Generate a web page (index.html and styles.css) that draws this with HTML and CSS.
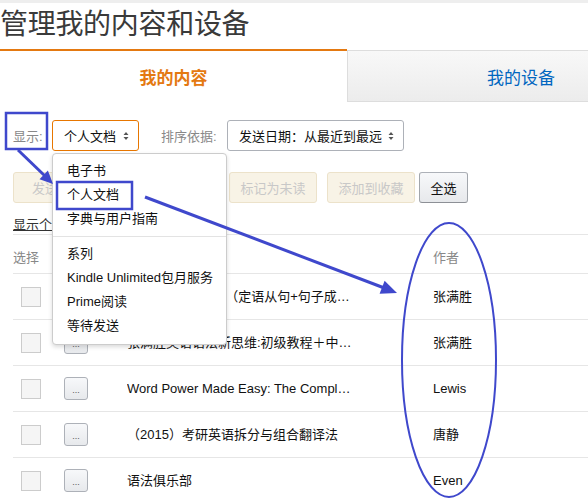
FILE: index.html
```html
<!DOCTYPE html>
<html lang="zh-CN">
<head>
<meta charset="utf-8">
<title>管理我的内容和设备</title>
<link rel="stylesheet" href="styles.css">
</head>
<body>
<div class="topbar"></div>
<h1 class="title">管理我的内容和设备</h1>
<div class="tabs">
  <div class="tab tab-active">我的内容</div>
  <div class="tab tab-inactive">我的设备</div>
</div>
<div class="controls">
  <div class="filter-row">
    <span class="label label-show">显示:</span>
    <div class="select select-type">
      <span>个人文档</span>
      <svg class="updown" width="6" height="10" viewBox="0 0 6 10"><path d="M3 1 L5.5 4 L0.5 4 Z M3 9 L5.5 6 L0.5 6 Z" fill="#555"/></svg>
      <div class="menu">
        <div class="menu-item">电子书</div>
        <div class="menu-item">个人文档</div>
        <div class="menu-item">字典与用户指南</div>
        <div class="menu-divider"></div>
        <div class="menu-item">系列</div>
        <div class="menu-item">Kindle Unlimited包月服务</div>
        <div class="menu-item">Prime阅读</div>
        <div class="menu-item">等待发送</div>
      </div>
    </div>
    <span class="label label-sort">排序依据:</span>
    <div class="select select-sort">
      <span>发送日期：从最近到最远</span>
      <svg class="updown" width="6" height="10" viewBox="0 0 6 10"><path d="M3 1 L5.5 4 L0.5 4 Z M3 9 L5.5 6 L0.5 6 Z" fill="#555"/></svg>
    </div>
  </div>
  <div class="btn-row">
    <button class="btn btn-disabled btn-send">发送到设备</button>
    <button class="btn btn-disabled btn-delete">从库中删除</button>
    <button class="btn btn-disabled btn-mark">标记为未读</button>
    <button class="btn btn-disabled btn-fav">添加到收藏</button>
    <button class="btn btn-normal btn-all">全选</button>
  </div>
  <div class="summary"><span class="summary-link">显示个人文档 (5)</span></div>
  <div class="thead">
    <span>选择</span><span></span><span></span><span>作者</span>
  </div>
  <div class="row">
    <span class="cb"></span><span class="more">...</span>
    <span class="name">英语长难句精讲&nbsp;&nbsp;（定语从句+句子成…</span><span class="author">张满胜</span>
  </div>
  <div class="row">
    <span class="cb"></span><span class="more">...</span>
    <span class="name">张满胜英语语法新思维:初级教程＋中…</span><span class="author">张满胜</span>
  </div>
  <div class="row">
    <span class="cb"></span><span class="more">...</span>
    <span class="name">Word Power Made Easy: The Compl…</span><span class="author">Lewis</span>
  </div>
  <div class="row">
    <span class="cb"></span><span class="more">...</span>
    <span class="name">（2015）考研英语拆分与组合翻译法</span><span class="author">唐静</span>
  </div>
  <div class="row">
    <span class="cb"></span><span class="more">...</span>
    <span class="name">语法俱乐部</span><span class="author">Even</span>
  </div>
</div>
<svg class="annot" width="588" height="498" viewBox="0 0 588 498">
  <g stroke="#3f48cc" fill="none">
    <rect x="6" y="113" width="41" height="36" stroke-width="2.5"/>
    <rect x="57" y="182" width="75" height="27" stroke-width="2.5"/>
    <line x1="18" y1="150" x2="45" y2="176" stroke-width="3"/>
    <line x1="145" y1="197" x2="383" y2="287.5" stroke-width="3"/>
    <ellipse cx="449" cy="360" rx="47" ry="137" stroke-width="2"/>
  </g>
  <g fill="#3f48cc">
    <polygon points="53,184 39.5,179.2 47.9,170.6"/>
    <polygon points="397,293 379.6,293.8 384.6,280.8"/>
  </g>
</svg>
</body>
</html>
```
FILE: styles.css
```css
html, body {
  margin: 0;
  padding: 0;
}
body {
  position: relative;
  width: 588px;
  height: 498px;
  overflow: hidden;
  background: #fff;
  font-family: "Liberation Sans", "Noto Sans CJK SC", sans-serif;
  font-size: 13px;
  color: #111;
}
.topbar {
  height: 3px;
  background: #eee;
}
.title {
  margin: -1px 0 0 0;
  height: 47px;
  font-family: "Noto Sans CJK SC", sans-serif;
  font-weight: normal;
  font-size: 28px;
  line-height: 40px;
  color: #3a3a3a;
  letter-spacing: -0.3px;
}
.tabs {
  display: flex;
  overflow: hidden;
  height: 53px;
}
.tab {
  flex: 0 0 347px;
  box-sizing: border-box;
  display: flex;
  align-items: center;
  justify-content: center;
  font-size: 17px;
  font-family: "Noto Sans CJK SC", sans-serif;
}
.tab-active {
  height: 53px;
  border-top: 2px solid #e47911;
  color: #e47911;
  font-weight: bold;
}
.tab-inactive {
  margin-top: 1px;
  height: 52px;
  border: 1px solid #ddd;
  border-right: none;
  background: linear-gradient(#f8f8f8, #ececec);
  color: #0066c0;
}
.controls {
  padding: 18px 0 0 13px;
}
.filter-row {
  display: flex;
  align-items: center;
  height: 31px;
}
.label {
  color: #888;
}
.label-show {
  width: 39px;
}
.label-sort {
  width: 66px;
  margin-left: 22px;
}
.select {
  position: relative;
  box-sizing: border-box;
  height: 31px;
  display: flex;
  align-items: center;
  padding: 0 9px 0 11px;
  border: 1px solid #adb1b8;
  border-radius: 3px;
  background: #fff;
  color: #111;
}
.select-type {
  width: 87px;
  border-color: #e77600;
}
.select-sort {
  width: 177px;
}
.updown {
  margin-left: auto;
}
.menu {
  position: absolute;
  top: 32px;
  left: -1px;
  z-index: 10;
  box-sizing: border-box;
  width: 175px;
  padding: 5px 0 6px;
  border: 1px solid #ccc;
  border-radius: 4px;
  background: #fff;
  box-shadow: 0 2px 4px rgba(0, 0, 0, 0.15);
}
.menu-item {
  height: 24px;
  line-height: 24px;
  padding-left: 14px;
  color: #111;
  white-space: nowrap;
}
.menu-divider {
  height: 1px;
  margin: 5px 0;
  background: #e3e3e3;
}
.btn-row {
  display: flex;
  margin-top: 21px;
  height: 31px;
}
.btn {
  box-sizing: border-box;
  height: 31px;
  padding: 0;
  border: 1px solid;
  border-radius: 3px;
  font-family: inherit;
  font-size: 13px;
  text-align: center;
}
.btn-disabled {
  background: #f8f3e6;
  border-color: #ece2ca;
  color: #c8c8c8;
}
.btn-normal {
  background: linear-gradient(#f7f8fa, #e7e9ec);
  border-color: #adb1b8 #a2a6ac #8d9096;
  color: #111;
}
.btn-send { width: 103px; }
.btn-delete { width: 91px; margin-left: 11px; }
.btn-mark { width: 88px; margin-left: 11px; }
.btn-fav { width: 88px; margin-left: 10px; }
.btn-all { width: 49px; margin-left: 4px; }
.summary {
  margin-top: 12px;
  height: 19px;
  line-height: 19px;
  border-bottom: 1px solid #e6e6e6;
  color: #333;
}
.summary-link {
  text-decoration: underline;
}
.thead {
  display: grid;
  grid-template-columns: 51px 63px 306px 1fr;
  padding: 13px 0 5px;
  line-height: 20px;
  border-bottom: 1px solid #e6e6e6;
  color: #888;
}
.row {
  display: grid;
  grid-template-columns: 51px 63px 306px 1fr;
  align-items: center;
  box-sizing: border-box;
  height: 46px;
  line-height: 20px;
  border-bottom: 1px solid #e6e6e6;
  color: #111;
}
.cb {
  display: block;
  width: 20px;
  height: 20px;
  box-sizing: border-box;
  margin-left: 8px;
  border: 1px solid #ccc;
  background: #f5f5f5;
}
.more {
  display: block;
  box-sizing: border-box;
  width: 24px;
  height: 23px;
  padding-top: 6px;
  border: 1px solid #adb1b8;
  border-radius: 3px;
  background: linear-gradient(#f7f8fa, #e7e9ec);
  font-size: 9px;
  line-height: 12px;
  color: #555;
  text-align: center;
}
.name {
  white-space: nowrap;
  overflow: hidden;
}
.annot {
  position: absolute;
  left: 0;
  top: 0;
  z-index: 20;
  pointer-events: none;
}
```
